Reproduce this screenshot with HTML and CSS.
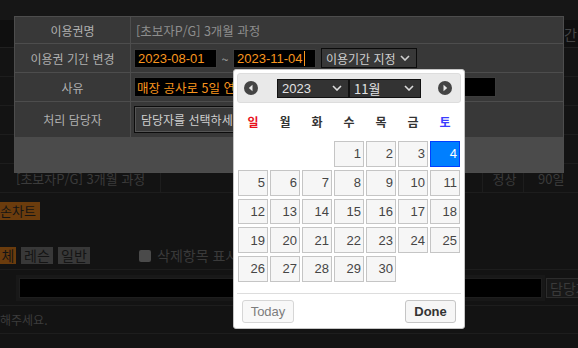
FILE: index.html
```html
<!DOCTYPE html>
<html lang="ko">
<head>
    <meta charset="UTF-8">
    <meta name="viewport" content="width=device-width, initial-scale=1.0">
    <title>이용권 기간 변경</title>
    <link rel="stylesheet" href="styles.css">
</head>
<body>

<!-- 뒤쪽 페이지 (어둡게 보이는 부분) -->
<div class="page">
    <div class="page-top"></div>
    <div class="page-head"><span>기간</span></div>
    <div class="page-row"></div>
    <div class="page-row"></div>
    <div class="page-row"></div>
    <div class="page-row"></div>
    <div class="page-row pass-row">
        <div class="cell name">[초보자P/G] 3개월 과정</div>
        <div class="cell grow"></div>
        <div class="cell state">정상</div>
        <div class="cell days">90일</div>
    </div>
    <div class="tab-bar">
        <span class="chip on tab">손차트</span>
    </div>
    <div class="filters">
        <span class="chip on first">체</span>
        <span class="chip">레슨</span>
        <span class="chip">일반</span>
        <span class="check"></span>
        <span class="check-text">삭제항목 표시</span>
    </div>
    <div class="memo">
        <div class="memo-input"></div>
        <span class="memo-btn">담당자</span>
    </div>
    <div class="hint">해주세요.</div>
</div>

<!-- 기간 변경 모달 -->
<div class="modal">
    <div class="form">
        <div class="label">이용권명</div>
        <div class="value muted">[초보자P/G] 3개월 과정</div>

        <div class="label">이용권 기간 변경</div>
        <div class="value">
            <span class="field date">2023-08-01</span>
            <span class="tilde">~</span>
            <span class="field date">2023-11-04<i class="caret"></i></span>
            <span class="select period">이용기간 지정
                <svg width="10" height="6" viewBox="0 0 10 6"><polyline points="1,1 5,5 9,1" fill="none" stroke="#d0d0d0" stroke-width="1.6"/></svg>
            </span>
        </div>

        <div class="label">사유</div>
        <div class="value">
            <span class="field reason">매장 공사로 5일 연장</span>
        </div>

        <div class="label last">처리 담당자</div>
        <div class="value last">
            <span class="select staff">담당자를 선택하세요</span>
        </div>
    </div>
    <div class="modal-foot"></div>
</div>

<!-- 달력 -->
<div class="datepicker">
    <div class="dp-head">
        <a class="dp-nav prev">
            <svg width="16" height="16" viewBox="0 0 16 16"><circle cx="8" cy="8" r="7" fill="#444"/><path d="M9.5 4.8 L5.8 8 L9.5 11.2 Z" fill="#e9e9e9"/></svg>
        </a>
        <div class="dp-title">
            <span class="dp-select">2023
                <svg width="10" height="6" viewBox="0 0 10 6"><polyline points="1,1 5,5 9,1" fill="none" stroke="#dcdcdc" stroke-width="1.6"/></svg>
            </span>
            <span class="dp-select">11월
                <svg width="10" height="6" viewBox="0 0 10 6"><polyline points="1,1 5,5 9,1" fill="none" stroke="#dcdcdc" stroke-width="1.6"/></svg>
            </span>
        </div>
        <a class="dp-nav next">
            <svg width="16" height="16" viewBox="0 0 16 16"><circle cx="8" cy="8" r="7" fill="#444"/><path d="M6.5 4.8 L10.2 8 L6.5 11.2 Z" fill="#e9e9e9"/></svg>
        </a>
    </div>
    <div class="dp-week">
        <span class="sun">일</span><span>월</span><span>화</span><span>수</span><span>목</span><span>금</span><span class="sat">토</span>
    </div>
    <div class="dp-days">
        <span class="empty"></span><span class="empty"></span><span class="empty"></span>
        <a>1</a><a>2</a><a>3</a><a class="active">4</a>
        <a>5</a><a>6</a><a>7</a><a>8</a><a>9</a><a>10</a><a>11</a>
        <a>12</a><a>13</a><a>14</a><a>15</a><a>16</a><a>17</a><a>18</a>
        <a>19</a><a>20</a><a>21</a><a>22</a><a>23</a><a>24</a><a>25</a>
        <a>26</a><a>27</a><a>28</a><a>29</a><a>30</a>
    </div>
    <div class="dp-buttons">
        <button class="dp-btn today">Today</button>
        <button class="dp-btn done">Done</button>
    </div>
</div>

</body>
</html>
```

FILE: styles.css
```css
* {
    box-sizing: border-box;
}
body {
    margin: 0;
    width: 578px;
    height: 348px;
    overflow: hidden;
    position: relative;
    background-color: #131313;
    font-family: "Noto Sans CJK KR", sans-serif;
    font-size: 12px;
}

/* 뒤쪽 페이지 */
.page {
    color: #3b3b3b;
    font-size: 13px;
}
.page-top {
    height: 20px;
    background-color: #161616;
}
.page-head {
    height: 28px;
    background-color: #0f0f0f;
    border-bottom: 1px solid #202020;
    display: flex;
    justify-content: flex-end;
    align-items: center;
    color: #444;
    font-size: 14px;
    padding-right: 1px;
}
.page-row {
    height: 29px;
    border-bottom: 1px solid #1d1d1d;
}
.pass-row {
    display: flex;
}
.pass-row .cell {
    display: flex;
    align-items: center;
    height: 100%;
}
.pass-row .name {
    width: 161px;
    padding-left: 16px;
    border-right: 1px solid #1d1d1d;
}
.pass-row .grow {
    flex: 1;
}
.pass-row .state {
    width: 41px;
    border-left: 1px solid #1d1d1d;
    justify-content: center;
    padding-left: 3px;
}
.pass-row .days {
    width: 55px;
    border-left: 1px solid #1d1d1d;
    padding-left: 14px;
}
.chip {
    display: inline-block;
    height: 18px;
    line-height: 18px;
    width: 32px;
    text-align: center;
    background-color: #383838;
    color: #141414;
    font-size: 14px;
}
.chip.on {
    background-color: #6b3c0d;
}
.tab-bar {
    padding-top: 8px;
    height: 26px;
}
.chip.tab {
    width: 40px;
    font-size: 13px;
    text-align: left;
}
.filters {
    margin-top: 28px;
    height: 23px;
    border-bottom: 1px solid #1d1d1d;
    display: flex;
    align-items: flex-start;
    gap: 5px;
}
.filters .chip {
    height: 17px;
    line-height: 17px;
}
.chip.first {
    width: 16px;
}
.check {
    width: 12px;
    height: 12px;
    margin: 3px 0 0 44px;
    background-color: #4a4a4a;
    border-radius: 2px;
}
.check-text {
    line-height: 17px;
    font-size: 14px;
    color: #3a3a3a;
    margin-left: 1px;
}
.memo {
    height: 36px;
    border-bottom: 1px solid #1d1d1d;
    display: flex;
    align-items: center;
}
.memo-input {
    flex: none;
    width: 529px;
    height: 26px;
    margin-left: 16px;
    border: 3px solid #181818;
    background-color: #000;
    box-shadow: inset 0 0 0 1px #1e1e1e;
}
.memo-btn {
    flex: none;
    margin-left: 1px;
    height: 20px;
    line-height: 18px;
    padding: 0 3px;
    border: 1px solid #2c2c2c;
    background-color: #181818;
    color: #3a3a3a;
    font-size: 14px;
    white-space: nowrap;
}
.hint {
    height: 28px;
    line-height: 28px;
    border-bottom: 1px solid #1d1d1d;
    font-size: 12px;
    color: #3c3c3c;
}

/* 모달 */
.modal {
    position: absolute;
    left: 14px;
    top: 16px;
    width: 550px;
    height: 157px;
    background-color: #4b4b4b;
    border: 1px solid #4d4d4d;
    display: flex;
    flex-direction: column;
}
.form {
    display: grid;
    grid-template-columns: 116px 1fr;
    grid-template-rows: 27px 29px 29px 35px;
    background-color: #383838;
}
.label {
    border-right: 1px solid #4d4d4d;
    border-bottom: 1px solid #4d4d4d;
    color: #b0b0b0;
    display: flex;
    align-items: center;
    justify-content: center;
}
.value {
    border-bottom: 1px solid #4d4d4d;
    display: flex;
    align-items: center;
    padding-left: 3px;
}
.label.last,
.value.last {
    border-bottom: none;
}
.value.muted {
    color: #8e8e8e;
    padding-left: 5px;
    font-size: 12.5px;
}
.field {
    height: 19px;
    background-color: #000;
    border: 1px solid #3c3c3c;
    color: #fa961e;
    font-family: "Liberation Sans", "Noto Sans CJK KR", sans-serif;
    font-size: 13px;
    display: flex;
    align-items: center;
    padding-left: 3px;
}
.field.date {
    width: 83px;
}
.field.reason {
    width: 362px;
    height: 20px;
    font-family: "Noto Sans CJK KR", sans-serif;
    font-size: 12.5px;
    padding-left: 2px;
}
.caret {
    width: 1px;
    height: 15px;
    margin-left: 1px;
    background-color: #fa961e;
}
.tilde {
    width: 16px;
    text-align: center;
    color: #aaa;
}
.select {
    height: 20px;
    background-color: #383838;
    border: 1px solid #0c0c0c;
    color: #cfcfcf;
    display: flex;
    align-items: center;
}
.select.period {
    margin-left: 5px;
    width: 96px;
    padding-left: 4px;
    gap: 4px;
}
.select.staff {
    width: 200px;
    height: 27px;
    padding-left: 6px;
    background-color: #3a3a3a;
    box-shadow: inset 0 0 0 1px #555;
}
.modal-foot {
    flex: 1;
}

/* 달력 */
.datepicker {
    position: absolute;
    left: 233px;
    top: 69px;
    width: 232px;
    padding: 3px 3px 5px;
    background-color: #fff;
    border: 1px solid #c5c5c5;
    border-radius: 3px;
    font-family: "Liberation Sans", Arial, sans-serif;
    font-size: 13px;
}
.dp-head {
    height: 30px;
    background-color: #e9e9e9;
    border: 1px solid #dddddd;
    border-radius: 3px;
    display: grid;
    grid-template-columns: 1fr auto 1fr;
    align-items: center;
}
.dp-nav {
    display: flex;
}
.dp-nav.prev {
    margin-left: 5px;
}
.dp-nav.next {
    justify-self: end;
    margin-right: 7px;
}
.dp-title {
    display: flex;
}
.dp-select {
    width: 72px;
    height: 19px;
    background-color: #333;
    border: 1px solid #111;
    color: #e2e2e2;
    display: flex;
    align-items: center;
    justify-content: space-between;
    padding: 0 6px 0 4px;
    font-size: 13px;
}
.dp-select:last-child {
    font-family: "Noto Sans CJK KR", sans-serif;
}
.dp-week {
    height: 36px;
    display: grid;
    grid-template-columns: repeat(7, 30px);
    column-gap: 2px;
    padding-left: 1px;
    align-items: center;
    text-align: center;
    font-family: "Noto Sans CJK KR", sans-serif;
    font-weight: bold;
    font-size: 12px;
    color: #333;
}
.dp-week .sun {
    color: #e8101a;
}
.dp-week .sat {
    color: #3c3cff;
}
.dp-days {
    margin-top: 2px;
    padding-left: 1px;
    display: grid;
    grid-template-columns: repeat(7, 30px);
    grid-auto-rows: 25.75px;
    column-gap: 2px;
    row-gap: 3px;
}
.dp-days a {
    background-color: #f6f6f6;
    border: 1px solid #c5c5c5;
    color: #454545;
    display: flex;
    align-items: center;
    justify-content: flex-end;
    padding-right: 2px;
}
.dp-days a.active {
    background-color: #007fff;
    border-color: #003eff;
    color: #fff;
}
.dp-buttons {
    margin-top: 11px;
    border-top: 1px solid #dddddd;
    padding: 6px 5px 0;
    display: flex;
    justify-content: space-between;
}
.dp-btn {
    height: 23px;
    background-color: #f6f6f6;
    border: 1px solid #c5c5c5;
    border-radius: 3px;
    font-family: "Liberation Sans", Arial, sans-serif;
    font-size: 13px;
    padding: 0;
}
.dp-btn.today {
    width: 52px;
    color: #454545;
    opacity: 0.7;
}
.dp-btn.done {
    width: 51px;
    font-weight: bold;
    color: #333;
}
```
